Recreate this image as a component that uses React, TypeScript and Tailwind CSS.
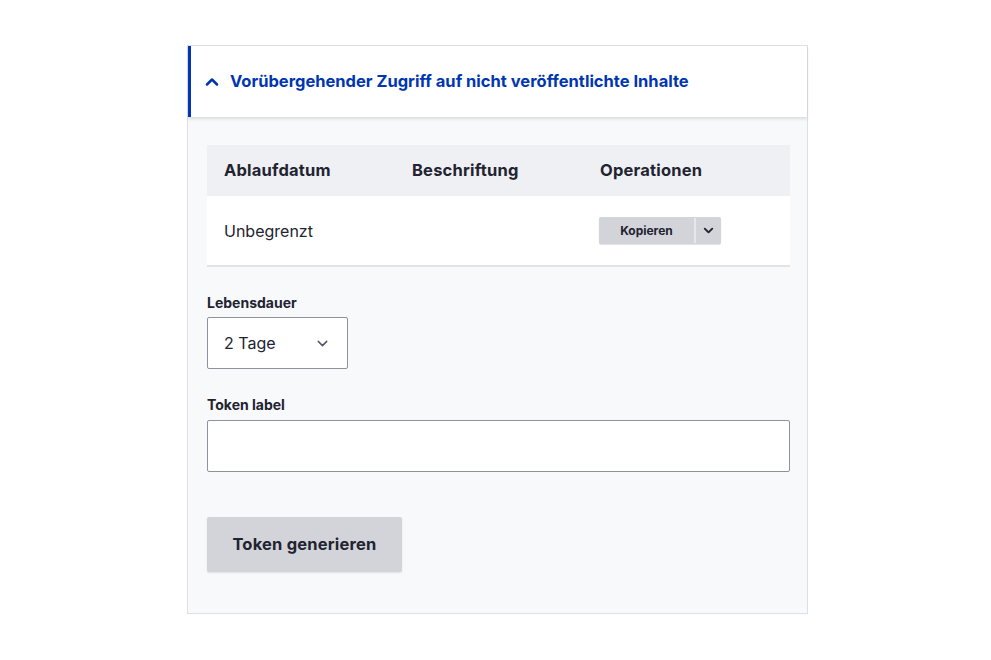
import { ChevronUp, ChevronDown } from "lucide-react";

const font = { fontFamily: "Inter, 'Noto Sans', sans-serif" };

export default function App() {
  return (
    <div className="w-[991px] h-[660px] bg-white pt-[45px] pl-[187px]" style={font}>
      <div className="w-[621px] h-[569px] border border-[#dedfe3] bg-[#f8f9fb] flex flex-col">
        {/* summary */}
        <div className="h-[71px] shrink-0 bg-white border-l-[3px] border-[#0036b1] shadow-[0_2px_3px_rgba(0,0,0,0.12)] flex items-center pl-[11px]">
          <ChevronUp className="size-[20px] text-[#0036b1] stroke-[3px]" />
          <span className="ml-[8px] text-[16.5px] font-bold text-[#0036b1]">
            Vorübergehender Zugriff auf nicht veröffentlichte Inhalte
          </span>
        </div>

        <div className="px-[19px] pt-[28px] flex flex-col">
          {/* table */}
          <div className="w-[583px] border-b-2 border-[#e2e3e7]">
            <div className="h-[51px] bg-[#eff0f3] flex items-center text-[16.5px] font-bold text-[#222330] tracking-[0.2px]">
              <div className="w-[188px] pl-[17px]">Ablaufdatum</div>
              <div className="w-[188px] pl-[17px]">Beschriftung</div>
              <div className="pl-[17px]">Operationen</div>
            </div>
            <div className="h-[69px] bg-white flex items-center text-[16px] text-[#222330]">
              <div className="w-[188px] pl-[17px]">Unbegrenzt</div>
              <div className="w-[188px]" />
              <div className="pl-[16px]">
                <div className="flex h-[27px] rounded-[2px] bg-[#d3d4d9] shadow-[0_1px_1px_rgba(0,0,0,0.12)]">
                  <div className="w-[95px] flex items-center justify-center text-[12px] font-bold text-[#222330]">Kopieren</div>
                  <div className="w-[2px] my-[1px] bg-[#e6e7ea]" />
                  <div className="w-[25px] flex items-center justify-center">
                    <ChevronDown className="size-[15px] text-[#222330] stroke-[3px]" />
                  </div>
                </div>
              </div>
            </div>
          </div>

          {/* Lebensdauer */}
          <label className="mt-[27px] text-[14px] font-bold text-[#222330] leading-[18px]">Lebensdauer</label>
          <div className="mt-[5px] w-[141px] h-[52px] bg-white border border-[#8e929c] rounded-[2px] flex items-center justify-between pl-[16px] pr-[16px]">
            <span className="text-[16px] text-[#222330]">2 Tage</span>
            <ChevronDown className="size-[17px] text-[#545560] stroke-[2px]" />
          </div>

          {/* Token label */}
          <label className="mt-[27px] text-[14px] font-bold text-[#222330] leading-[18px]">Token label</label>
          <div className="mt-[6px] w-[583px] h-[52px] bg-white border border-[#8e929c] rounded-[2px]" />

          <div className="mt-[45px]">
            <button className="h-[55px] w-[195px] bg-[#d3d4d9] rounded-[2px] text-[16.5px] font-bold text-[#222330] tracking-[0.2px] shadow-[0_1px_2px_rgba(0,0,0,0.1)]">
              Token generieren
            </button>
          </div>
        </div>
      </div>
    </div>
  );
}
